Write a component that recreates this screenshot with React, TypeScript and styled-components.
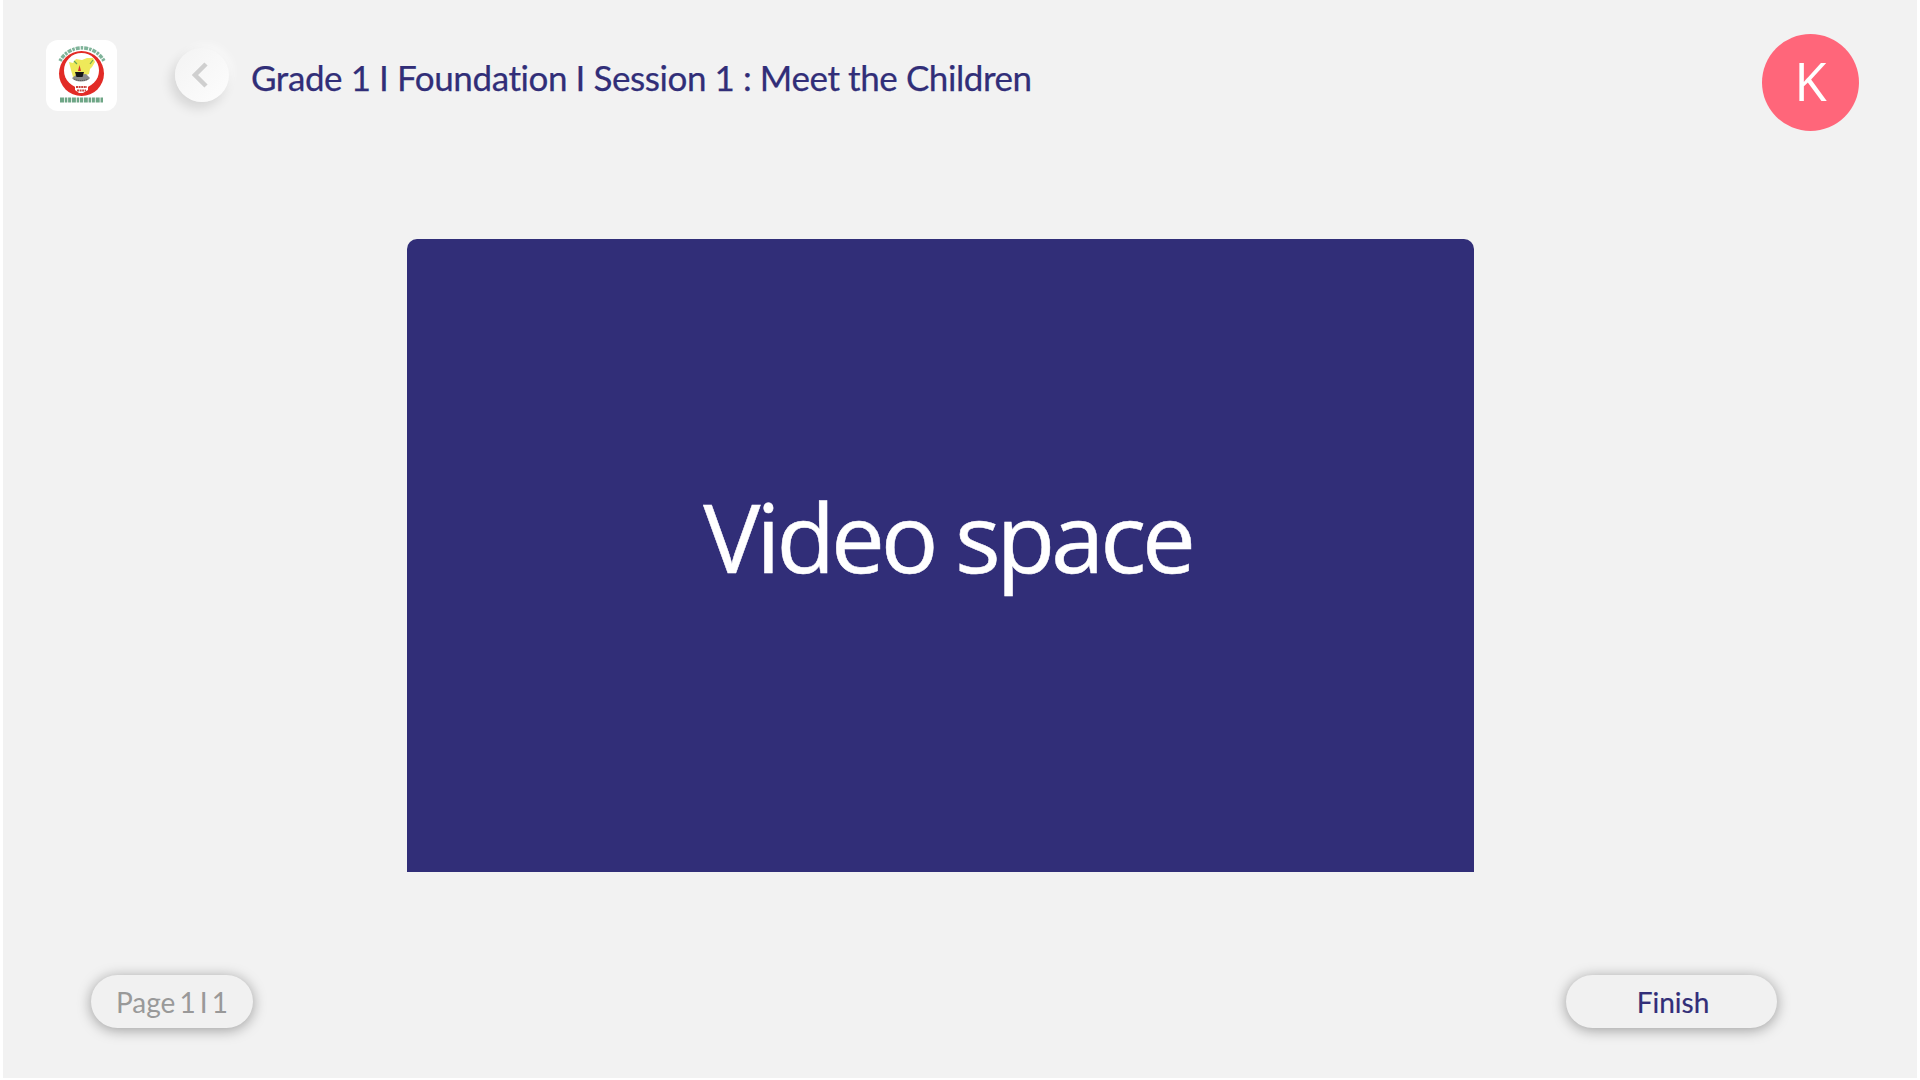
import styled, { createGlobalStyle } from 'styled-components';

const navy = '#312e78';

const GlobalStyle = createGlobalStyle`
  html, body {
    margin: 0;
    padding: 0;
    background: #fff;
  }
`;

const Page = styled.div`
  box-sizing: border-box;
  width: 1914px;
  height: 1078px;
  margin-left: 3px;
  background: #f2f2f2;
  display: flex;
  flex-direction: column;
  padding: 34px 58px 50px 43px;
  font-family: 'Lato', sans-serif;
`;

const Header = styled.header`
  display: flex;
  align-items: flex-start;
  height: 205px;
`;

const Logo = styled.div`
  width: 71px;
  height: 71px;
  margin-top: 6px;
  border-radius: 12px;
  background: #fff;
  flex: none;
`;

const BackButton = styled.button`
  width: 54px;
  height: 54px;
  margin: 14px 0 0 58px;
  padding: 0 5px 0 0;
  border: none;
  border-radius: 50%;
  background: linear-gradient(135deg, #f3f3f3, #fdfdfd);
  box-shadow: -4px 6px 12px rgba(0, 0, 0, 0.12), 4px -4px 8px rgba(255, 255, 255, 0.5);
  display: flex;
  align-items: center;
  justify-content: center;
  flex: none;
`;

const Title = styled.h1`
  margin: 22px 0 0 22px;
  font-size: 35px;
  line-height: 42px;
  font-weight: 400;
  letter-spacing: -0.42px;
  -webkit-text-stroke: 0.25px ${navy};
  color: ${navy};
  white-space: nowrap;
  flex: 1;
`;

const Avatar = styled.div`
  box-sizing: border-box;
  width: 97px;
  height: 97px;
  padding-bottom: 5px;
  border-radius: 50%;
  background: #ff667a;
  color: #fff;
  font-family: 'Open Sans', sans-serif;
  font-size: 53px;
  display: flex;
  align-items: center;
  justify-content: center;
  flex: none;
`;

const VideoRow = styled.main`
  display: flex;
  padding-left: 361px;
`;

const VideoPanel = styled.div`
  box-sizing: border-box;
  width: 1067px;
  height: 633px;
  padding: 0 0 40px 14px;
  border-radius: 10px 10px 0 0;
  background: ${navy};
  display: flex;
  align-items: center;
  justify-content: center;
  color: #fff;
  font-family: 'Open Sans', sans-serif;
  font-size: 96px;
  letter-spacing: -4.2px;
  -webkit-text-stroke: 0.5px #fff;
`;

const Footer = styled.footer`
  display: flex;
  justify-content: space-between;
  align-items: flex-end;
  margin-top: auto;
  padding: 0 82px 0 45px;
`;

const Pill = styled.div<{ $width: number; $muted?: boolean }>`
  width: ${(p) => p.$width}px;
  height: 53px;
  border-radius: 27px;
  background: #f1f1f1;
  box-shadow: 0 2px 14px rgba(0, 0, 0, 0.36);
  display: flex;
  align-items: center;
  justify-content: center;
  font-size: 28px;
  word-spacing: ${(p) => (p.$muted ? '-3px' : '0')};
  padding-left: ${(p) => (p.$muted ? '0' : '3px')};
  box-sizing: border-box;
  color: ${(p) => (p.$muted ? '#999' : navy)};
  -webkit-text-stroke: ${(p) => (p.$muted ? '0' : '0.2px')} ${navy};
`;

const Logomark = () => (
  <svg width="71" height="71" viewBox="0 0 71 71">
    {/* arched heading */}
    <path d="M14 21 A25 25 0 0 1 58 21" fill="none" stroke="#5fa080" strokeWidth="3.5" strokeDasharray="2.5 1 4 1" opacity="0.8" />
    {/* red crescent */}
    <circle cx="35.5" cy="33.5" r="22.5" fill="#e22b26" />
    <circle cx="35.5" cy="30.5" r="17.5" fill="#fff" />
    {/* state map */}
    <path d="M23 22 L27 23 L30 19 L36 20 L41 18 L47 18 L49 22 L46 27 L44 29 L43 34 L38 36 L27 37 L25 30 Z" fill="#eee95a" />
    <path d="M28 21 L31 24 M47 20 L44 24" stroke="#6aa84f" strokeWidth="1.2" />
    {/* lamp and book */}
    <path d="M33.5 25 L35 31 H32 Z" fill="#d8342c" />
    <path d="M26 38 A9.5 5 0 0 0 44 38 L40 34 L30 35 Z" fill="#8a8a8a" />
    <path d="M28 39 A8 3 0 0 0 42 39" fill="none" stroke="#444" strokeWidth="1" strokeDasharray="1 1" />
    <path d="M29 32 H38 L36.5 37 H30.5 Z" fill="#161616" />
    {/* caption inside the ring */}
    <path d="M29 45 L42 45 L42 50 L37 53 L33 53 L29 50 Z" fill="#fff" />
    <path d="M30 47 H41 M31 50.5 H40" stroke="#c9453f" strokeWidth="2" strokeDasharray="2 0.6" />
    {/* bottom line */}
    <path d="M14 60 H57" stroke="#4a9068" strokeWidth="5" strokeDasharray="4 0.8 2.5 0.8 3 0.8" opacity="0.8" />
  </svg>
);

export default function App() {
  return (
    <>
      <GlobalStyle />
      <Page>
        <Header>
          <Logo>
            <Logomark />
          </Logo>
          <BackButton aria-label="Back">
            <svg width="16" height="26" viewBox="0 0 16 26">
              <path d="M14 2 L3 13 L14 24" fill="none" stroke="#cfcfcf" strokeWidth="4.5" />
            </svg>
          </BackButton>
          <Title>Grade 1 I Foundation I Session 1 : Meet the Children</Title>
          <Avatar>K</Avatar>
        </Header>
        <VideoRow>
          <VideoPanel>Video space</VideoPanel>
        </VideoRow>
        <Footer>
          <Pill $width={162} $muted>Page 1 I 1</Pill>
          <Pill $width={211}>Finish</Pill>
        </Footer>
      </Page>
    </>
  );
}
